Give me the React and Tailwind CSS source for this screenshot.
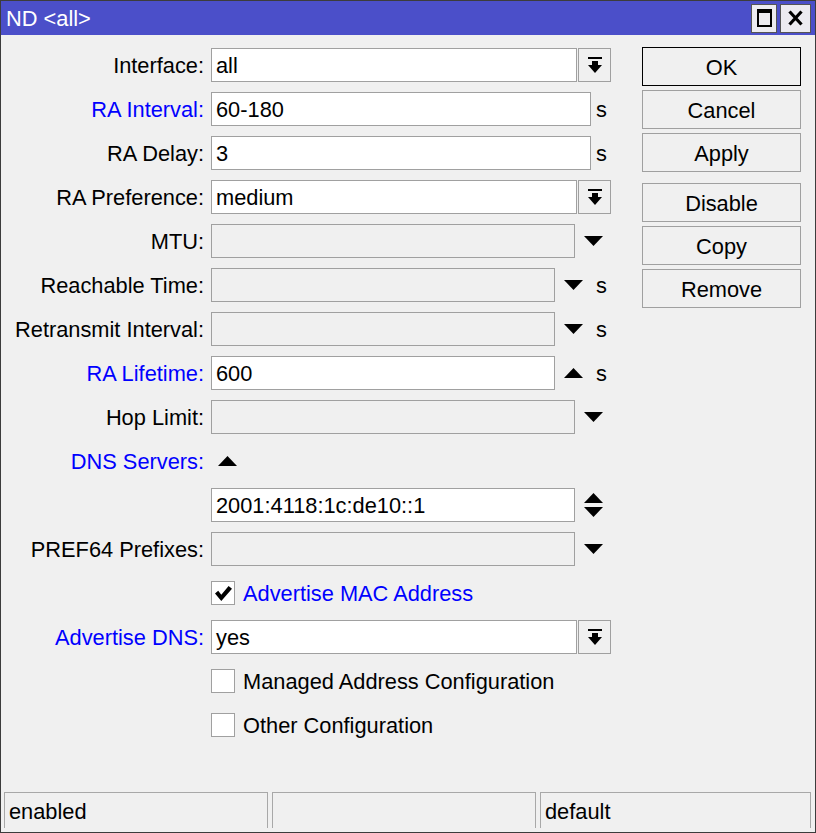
import React from "react";

const FONT = "font-['Liberation_Sans',Arial,sans-serif]";

function DownTri() {
  return (
    <svg width="19" height="10" viewBox="0 0 19 10" className="block">
      <polygon points="0,0 19,0 9.5,10" fill="#000" />
    </svg>
  );
}

function UpTri() {
  return (
    <svg width="19" height="10" viewBox="0 0 19 10" className="block">
      <polygon points="9.5,0 19,10 0,10" fill="#000" />
    </svg>
  );
}

function DropButton() {
  return (
    <div className="ml-px w-[33px] h-[34px] border border-[#a0a0a0] bg-[#f0f0f0] flex items-center justify-center">
      <svg width="14" height="17" viewBox="0 0 14 17" className="block">
        <rect x="0" y="0" width="14" height="2" fill="#000" />
        <rect x="4" y="4" width="6" height="4" fill="#000" />
        <polygon points="0,8 14,8 7,16" fill="#000" />
      </svg>
    </div>
  );
}

function Field({ value, width, disabled }) {
  return (
    <div
      className={`h-[34px] border border-[#a0a0a0] flex items-center pl-1 pt-[1px] ${disabled ? "bg-[#f0f0f0]" : "bg-white"}`}
      style={{ width }}
    >
      {value}
    </div>
  );
}

function Row({ label, blue, children }) {
  return (
    <div className="flex items-center h-[34px]">
      <div className={`w-[203px] pt-[2px] text-right whitespace-nowrap ${blue ? "text-[#0000ff]" : ""}`}>{label}</div>
      <div className="ml-[7px] flex items-center">{children}</div>
    </div>
  );
}

function Unit({ className }) {
  return <span className={`pt-[2px] ${className || ""}`}>s</span>;
}

function Checkbox({ checked, label, blue }) {
  return (
    <div className="flex items-center h-[34px]">
      <div className="ml-[210px] w-[24px] h-[24px] border border-[#a0a0a0] bg-white flex items-center justify-center">
        {checked && (
          <svg width="17" height="15" viewBox="0 0 17 15" className="block">
            <polygon points="0,7.5 3.2,4.8 6.3,8.8 13.6,0 17,2.7 6.3,15" fill="#000" />
          </svg>
        )}
      </div>
      <span className={`ml-[8px] pt-[2px] ${blue ? "text-[#0000ff]" : ""}`}>{label}</span>
    </div>
  );
}

function Btn({ children, primary, extra }) {
  return (
    <div
      className={`h-[39px] pt-[2px] flex items-center justify-center border ${primary ? "border-black" : "border-[#a0a0a0]"} bg-[#f0f0f0] ${extra || ""}`}
    >
      {children}
    </div>
  );
}

export default function App() {
  return (
    <div className={`w-[816px] h-[833px] bg-[#f0f0f0] border border-[#3c3c3c] flex flex-col text-[21.8px] leading-none text-black ${FONT}`}>
      <div className="h-[34px] shrink-0 bg-[#4b4fc9] flex items-center justify-between pl-[5px] pr-[4px]">
        <span className="text-white pt-[2px]">ND &lt;all&gt;</span>
        <div className="flex gap-[3px]">
          <div className="w-[26px] h-[29px] bg-[#ecebf0] border border-[#555] flex items-center justify-center">
            <svg width="15" height="18" viewBox="0 0 15 18" className="block">
              <rect x="1" y="1" width="13" height="16" fill="none" stroke="#000" strokeWidth="2" />
              <rect x="1" y="1" width="13" height="3" fill="#000" />
            </svg>
          </div>
          <div className="w-[31px] h-[29px] bg-[#ecebf0] border border-[#555] flex items-center justify-center">
            <svg width="15" height="16" viewBox="0 0 15 16" className="block">
              <path d="M1.5 1.5 L13.5 14.5 M13.5 1.5 L1.5 14.5" stroke="#000" strokeWidth="3.2" />
            </svg>
          </div>
        </div>
      </div>

      <div className="flex-1 flex">
        <div className="w-[610px] pt-[13px] flex flex-col gap-[10px]">
          <Row label="Interface:">
            <Field value="all" width={366} />
            <DropButton />
          </Row>
          <Row label="RA Interval:" blue>
            <Field value="60-180" width={380} />
            <Unit className="ml-[5px]" />
          </Row>
          <Row label="RA Delay:">
            <Field value="3" width={380} />
            <Unit className="ml-[5px]" />
          </Row>
          <Row label="RA Preference:">
            <Field value="medium" width={366} />
            <DropButton />
          </Row>
          <Row label="MTU:">
            <Field width={364} disabled />
            <div className="ml-[9px]"><DownTri /></div>
          </Row>
          <Row label="Reachable Time:">
            <Field width={344} disabled />
            <div className="ml-[9px] mr-[13px]"><DownTri /></div>
            <Unit />
          </Row>
          <Row label="Retransmit Interval:">
            <Field width={344} disabled />
            <div className="ml-[9px] mr-[13px]"><DownTri /></div>
            <Unit />
          </Row>
          <Row label="RA Lifetime:" blue>
            <Field value="600" width={344} />
            <div className="ml-[9px] mr-[13px]"><UpTri /></div>
            <Unit />
          </Row>
          <Row label="Hop Limit:">
            <Field width={364} disabled />
            <div className="ml-[9px]"><DownTri /></div>
          </Row>
          <Row label="DNS Servers:" blue>
            <div className="ml-[7px]"><UpTri /></div>
          </Row>
          <Row label="">
            <Field value="2001:4118:1c:de10::1" width={364} />
            <div className="ml-[9px] flex flex-col gap-[4px]">
              <UpTri />
              <DownTri />
            </div>
          </Row>
          <Row label="PREF64 Prefixes:">
            <Field width={364} disabled />
            <div className="ml-[9px]"><DownTri /></div>
          </Row>
          <Checkbox checked label="Advertise MAC Address" blue />
          <Row label="Advertise DNS:" blue>
            <Field value="yes" width={366} />
            <DropButton />
          </Row>
          <Checkbox label="Managed Address Configuration" />
          <Checkbox label="Other Configuration" />
        </div>

        <div className="ml-[31px] w-[159px] pt-[12px] flex flex-col gap-[4px]">
          <Btn primary>OK</Btn>
          <Btn>Cancel</Btn>
          <Btn>Apply</Btn>
          <Btn extra="mt-[7px]">Disable</Btn>
          <Btn>Copy</Btn>
          <Btn>Remove</Btn>
        </div>
      </div>

      <div className="h-[36px] mb-[4px] shrink-0 flex gap-[4px] pl-[3px] pr-[4px]">
        <div className="w-[264px] border-t border-l border-r border-[#a8a8a8] flex items-center pl-[4px] pt-[2px]">enabled</div>
        <div className="w-[264px] border-t border-l border-r border-[#a8a8a8]"></div>
        <div className="flex-1 border-t border-l border-r border-[#a8a8a8] flex items-center pl-[4px] pt-[2px]">default</div>
      </div>
    </div>
  );
}
